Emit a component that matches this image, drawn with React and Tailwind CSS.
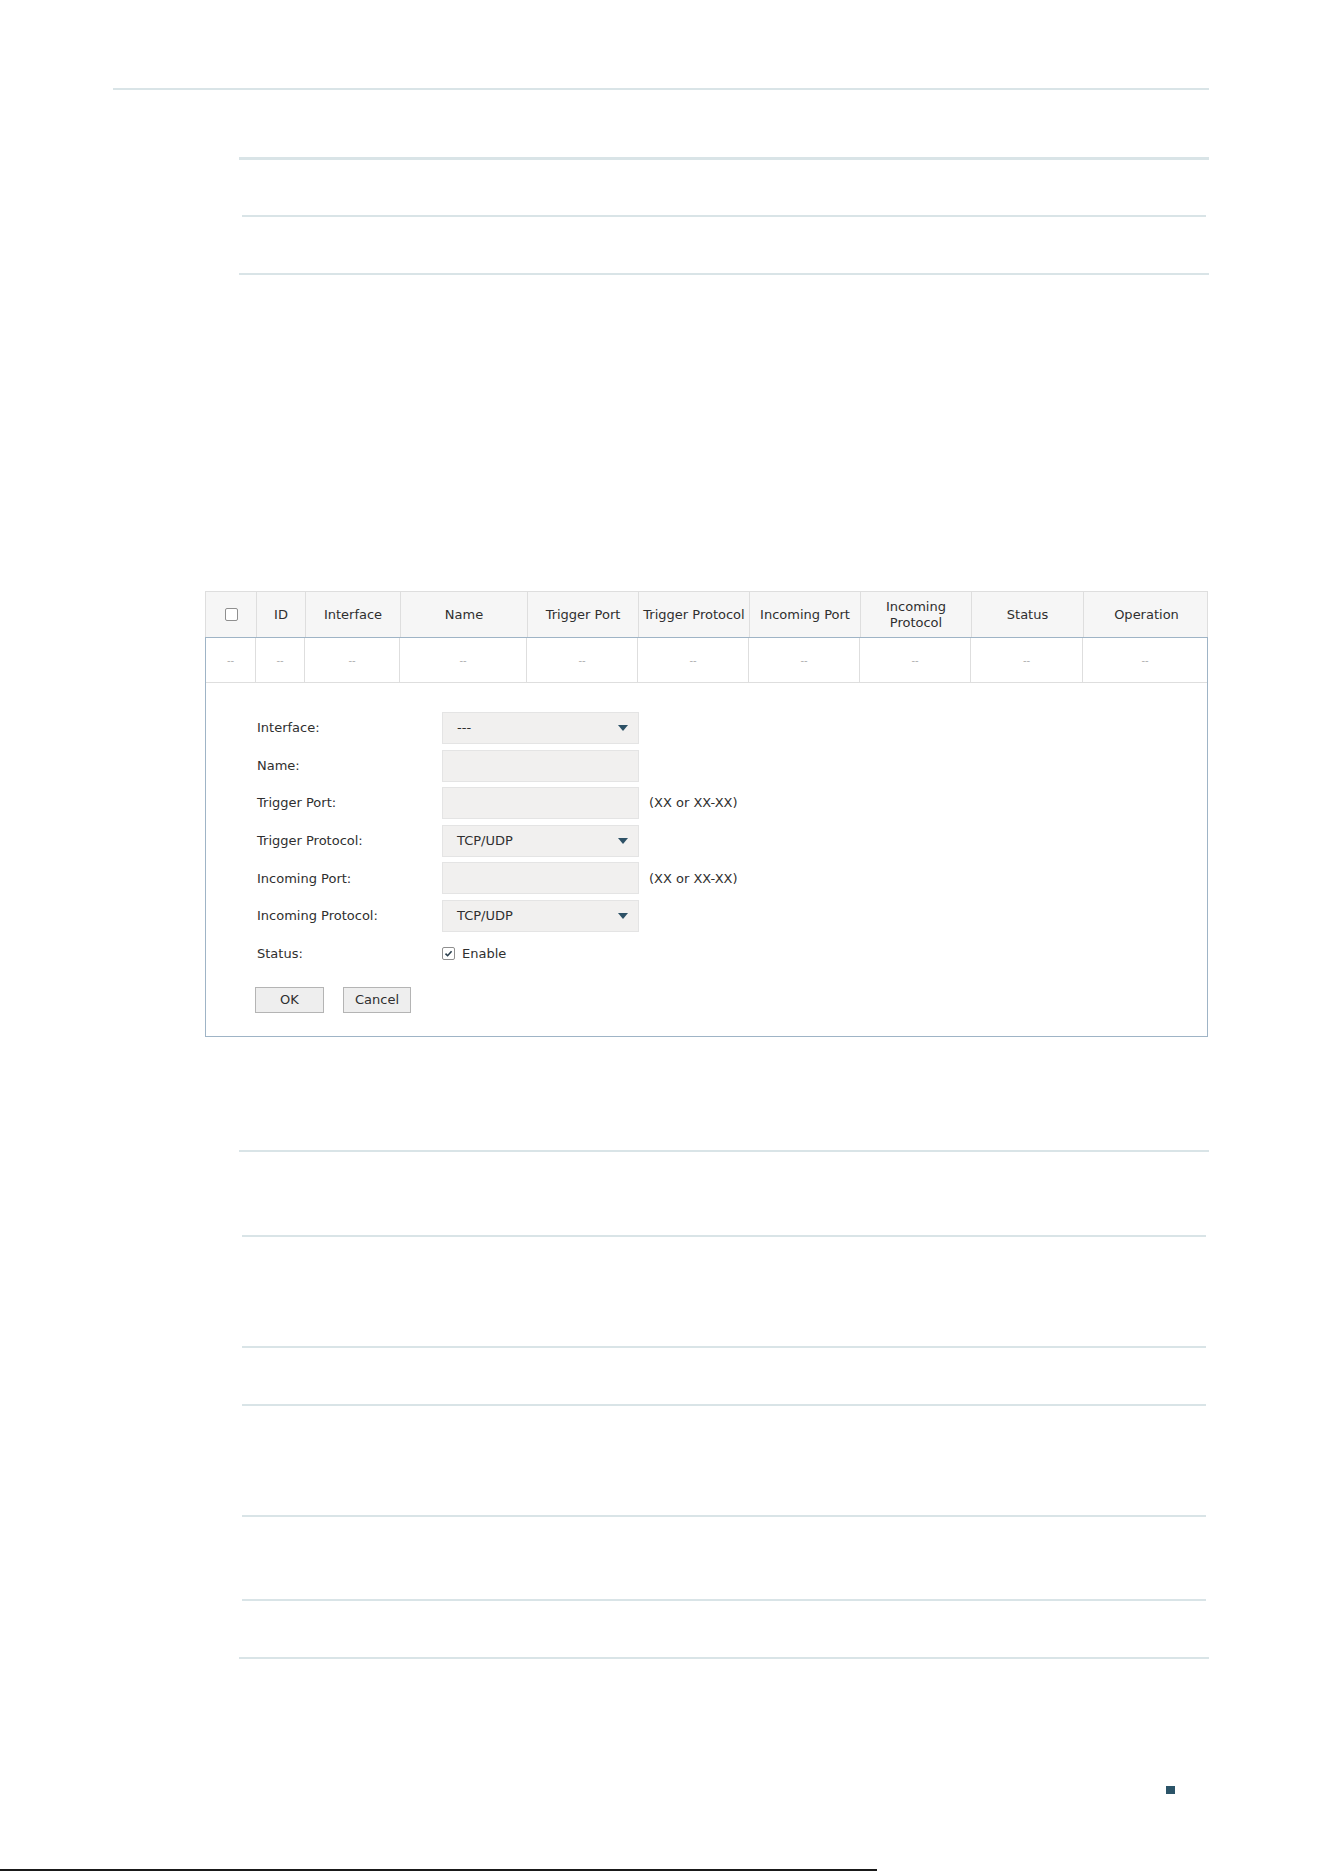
import React from "react";

const font = { fontFamily: '"DejaVu Sans", Verdana, sans-serif' };

const cols = [
  "Interface",
  "Name",
  "Trigger Port",
  "Trigger Protocol",
  "Incoming Port",
  "Incoming Protocol",
  "Status",
  "Operation",
];

function Arrow() {
  return (
    <svg width="10" height="6" viewBox="0 0 10 6" className="shrink-0">
      <path d="M0 0 L10 0 L5 6 Z" fill="#2d5166" />
    </svg>
  );
}

function Field({ label, value, select, hint }) {
  return (
    <div className="flex h-[32px] items-center">
      <div className="w-[185px]">{label}</div>
      <div className="flex h-[32px] w-[197px] items-center justify-between border border-[#e4e4e4] bg-[#f1f0ef] pl-[14px] pr-[10px]">
        <span>{value}</span>
        {select && <Arrow />}
      </div>
      {hint && <div className="ml-[10px]">{hint}</div>}
    </div>
  );
}

function Rule({ inset }) {
  return (
    <div className={inset ? "mx-[3px] h-[2px] bg-[#d9e4e7]" : "h-[2px] bg-[#d9e4e7]"} />
  );
}

export default function App() {
  return (
    <div className="relative h-[1872px] w-[1324px] overflow-hidden bg-white text-[13px] text-[#2f2f2f]" style={font}>
      <div className="pt-[88px]">
        <div className="ml-[113px] h-[2px] w-[1096px] bg-[#d9e4e7]" />

        {/* upper table rules */}
        <div className="ml-[239px] mt-[67px] w-[970px]">
          <div className="h-[3px] bg-[#d9e4e7]" />
          <div className="h-[55px]" />
          <Rule inset />
          <div className="h-[56px]" />
          <Rule />
        </div>

        {/* screenshot table */}
        <div className="ml-[205px] mt-[316px] w-[1003px]">
          <div className="grid h-[46px] grid-cols-[51px_49px_95px_127px_111px_111px_111px_111px_112px_125px] border-x border-t border-[#dedede] bg-[#f6f6f6]">
            <div className="flex items-center justify-center border-r border-[#dedede]">
              <div className="h-[13px] w-[13px] rounded-[2px] border border-[#8f8f8f] bg-white" />
            </div>
            <div className="flex items-center justify-center border-r border-[#dedede]">ID</div>
            {cols.map((c, i) => (
              <div
                key={c}
                className={
                  i === cols.length - 1
                    ? "flex items-center justify-center text-center leading-[16px]"
                    : "flex items-center justify-center whitespace-nowrap border-r border-[#dedede] text-center leading-[16px]"
                }
              >
                {c === "Incoming Protocol" ? (
                  <span>
                    Incoming
                    <br />
                    Protocol
                  </span>
                ) : (
                  c
                )}
              </div>
            ))}
          </div>

          <div className="border border-[#9fb4c6]">
            <div className="grid h-[45px] grid-cols-[50px_49px_95px_127px_111px_111px_111px_111px_112px_124px] border-b border-[#dedede] text-[10px] text-[#b0b0b0]">
              {Array.from({ length: 10 }).map((_, i) => (
                <div
                  key={i}
                  className={
                    i === 9
                      ? "flex items-center justify-center"
                      : "flex items-center justify-center border-r border-[#dedede]"
                  }
                >
                  --
                </div>
              ))}
            </div>

            <div className="pb-[23px] pl-[51px] pt-[29px]">
              <div className="flex flex-col gap-[5.6px]">
                <Field label="Interface:" value="---" select />
                <Field label="Name:" value="" />
                <Field label="Trigger Port:" value="" hint="(XX or XX-XX)" />
                <Field label="Trigger Protocol:" value="TCP/UDP" select />
                <Field label="Incoming Port:" value="" hint="(XX or XX-XX)" />
                <Field label="Incoming Protocol:" value="TCP/UDP" select />
                <div className="flex h-[32px] items-center">
                  <div className="w-[185px]">Status:</div>
                  <div className="flex h-[13px] w-[13px] items-center justify-center rounded-[2px] border border-[#8f8f8f] bg-white">
                    <svg width="9" height="9" viewBox="0 0 9 9">
                      <path d="M1.5 4.6 L3.6 6.7 L7.6 2.2" fill="none" stroke="#2a3e4c" strokeWidth="1.6" />
                    </svg>
                  </div>
                  <span className="ml-[7px]">Enable</span>
                </div>
              </div>
              <div className="ml-[-2px] mt-[17px] flex gap-[19px]">
                <button className="h-[26px] w-[69px] border border-[#b4b4b4] bg-[#eeeeee] text-[13px] text-[#2f2f2f]">OK</button>
                <button className="h-[26px] w-[68px] border border-[#b4b4b4] bg-[#eeeeee] text-[13px] text-[#2f2f2f]">Cancel</button>
              </div>
            </div>
          </div>
        </div>

        {/* lower table rules */}
        <div className="ml-[239px] mt-[113px] w-[970px]">
          <Rule />
          <div className="h-[83px]" />
          <Rule inset />
          <div className="h-[109px]" />
          <Rule inset />
          <div className="h-[56px]" />
          <Rule inset />
          <div className="h-[109px]" />
          <Rule inset />
          <div className="h-[82px]" />
          <Rule inset />
          <div className="h-[56px]" />
          <Rule />
        </div>

        <div className="ml-[1166px] mt-[127px] h-[8px] w-[9px] bg-[#2b5468]" />

        {/* cropped footer edge */}
        <div className="mt-[75px] h-[2px] w-[877px] bg-[#1a1a1a]" />
      </div>
    </div>
  );
}
